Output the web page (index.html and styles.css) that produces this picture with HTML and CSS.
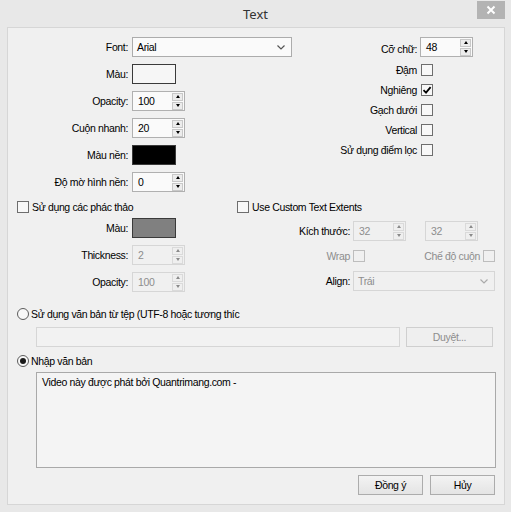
FILE: index.html
```html
<!DOCTYPE html>
<html lang="vi">
<head>
<meta charset="utf-8">
<title>Text</title>
<link rel="stylesheet" href="styles.css">
</head>
<body>
<div class="window">
  <div class="titlebar">
    <span></span>
    <div class="title">Text</div>
    <button class="close" aria-label="Đóng"><svg width="10" height="10" viewBox="0 0 10 10"><path d="M1.5 1.5L8.5 8.5M8.5 1.5L1.5 8.5" stroke="#fff" stroke-width="2"/></svg></button>
  </div>
  <div class="panel">
    <div class="sec-top">
      <div class="grid-l">
        <label>Font:</label>
        <div class="select font-sel"><span>Arial</span><svg class="chev" width="8" height="5" viewBox="0 0 8 5"><polyline points="0.5,0.5 4,4 7.5,0.5" fill="none" stroke="#555" stroke-width="1.2"/></svg></div>
        <label>Màu:</label>
        <div class="swatch sw-light"></div>
        <label>Opacity:</label>
        <div class="spin"><span class="val">100</span><div class="arrows"><i class="up"></i><i class="down"></i></div></div>
        <label>Cuộn nhanh:</label>
        <div class="spin"><span class="val">20</span><div class="arrows"><i class="up"></i><i class="down"></i></div></div>
        <label>Màu nền:</label>
        <div class="swatch sw-black"></div>
        <label>Độ mờ hình nền:</label>
        <div class="spin"><span class="val">0</span><div class="arrows"><i class="up"></i><i class="down"></i></div></div>
      </div>
      <div class="grid-r">
        <label>Cỡ chữ:</label>
        <div class="spin top"><span class="val">48</span><div class="arrows"><i class="up"></i><i class="down"></i></div></div>
        <label>Đậm</label><span class="cb"></span>
        <label>Nghiêng</label><span class="cb"><svg width="10" height="10" viewBox="0 0 10 10"><path d="M1.5 5.2L4 7.6L8.6 2.2" fill="none" stroke="#000" stroke-width="1.8"/></svg></span>
        <label>Gạch dưới</label><span class="cb"></span>
        <label>Vertical</label><span class="cb"></span>
        <label>Sử dụng điểm lọc</label><span class="cb"></span>
      </div>
    </div>

    <div class="sec-mid">
      <div class="col-l">
        <div class="check-head"><span class="cb"></span><span>Sử dụng các phác thảo</span></div>
        <div class="grid-l mid">
          <label>Màu:</label>
          <div class="swatch sw-gray"></div>
          <label>Thickness:</label>
          <div class="spin dis"><span class="val">2</span><div class="arrows"><i class="up"></i><i class="down"></i></div></div>
          <label>Opacity:</label>
          <div class="spin dis"><span class="val">100</span><div class="arrows"><i class="up"></i><i class="down"></i></div></div>
        </div>
      </div>
      <div class="col-r">
        <div class="check-head"><span class="cb"></span><span>Use Custom Text Extents</span></div>
        <div class="ext-grid">
          <label>Kích thước:</label>
          <div class="spin dis"><span class="val">32</span><div class="arrows"><i class="up"></i><i class="down"></i></div></div>
          <div class="cell3"><div class="spin dis"><span class="val">32</span><div class="arrows"><i class="up"></i><i class="down"></i></div></div></div>
          <label class="muted">Wrap</label>
          <span class="cb dis"></span>
          <div class="cell3 end"><span class="muted">Chế độ cuộn</span><span class="cb dis"></span></div>
          <label>Align:</label>
          <div class="select dis align-sel"><span>Trái</span><svg class="chev" width="8" height="5" viewBox="0 0 8 5"><polyline points="0.5,0.5 4,4 7.5,0.5" fill="none" stroke="#aaa" stroke-width="1.2"/></svg></div>
        </div>
      </div>
    </div>

    <div class="opt first"><span class="radio"></span><span>Sử dụng văn bản từ tệp (UTF-8 hoặc tương thíc</span></div>
    <div class="file-row"><div class="field dis"></div><button class="btn dis browse">Duyệt...</button></div>
    <div class="opt second"><span class="radio on"></span><span>Nhập văn bản</span></div>
    <div class="textarea">Video này được phát bởi Quantrimang.com -</div>
    <div class="footer"><button class="btn">Đồng ý</button><button class="btn">Hủy</button></div>
  </div>
</div>
</body>
</html>
```
FILE: styles.css
```css
* { box-sizing: border-box; }
body {
  margin: 0;
  background: #e8e8e8;
  font-family: "Liberation Sans", Arial, sans-serif;
  font-size: 10.5px;
  letter-spacing: -0.35px;
  color: #000;
}
button { font: inherit; letter-spacing: inherit; color: inherit; }

.window {
  width: 511px;
  height: 512px;
  background: #e8e8e8;
  display: flex;
  flex-direction: column;
}
.titlebar {
  height: 27px;
  flex: none;
  display: grid;
  grid-template-columns: 1fr auto 1fr;
  align-items: start;
}
.title {
  font-family: "Noto Sans", sans-serif;
  font-size: 13px;
  letter-spacing: 0;
  color: #333;
  line-height: 28px;
}
.close {
  justify-self: end;
  margin: 1px 6px 0 0;
  width: 28px;
  height: 18px;
  padding: 0;
  border: 0;
  background: #b3b3b3;
  display: flex;
  align-items: center;
  justify-content: center;
}

.panel {
  flex: 1;
  margin: 0 6px 7px 7px;
  border: 1px solid #d6d6d6;
  background: #f0f0f0;
  display: flex;
  flex-direction: column;
}

/* generic controls */
label { white-space: nowrap; }
.muted { color: #8d8d8d; }

.select {
  height: 20px;
  border: 1px solid #acacac;
  background: #fafafa;
  display: flex;
  align-items: center;
  padding: 0 6px 0 4px;
}
.select span { flex: 1; }
.select.dis { border-color: #d6d6d6; background: #f0f0f0; color: #8d8d8d; }
.font-sel { width: 160px; }

.swatch { width: 44px; height: 20px; border: 1px solid #3a3a3a; }
.sw-light { background: #f6f6f6; }
.sw-black { background: #000; }
.sw-gray { background: #808080; }

.spin {
  width: 53px;
  height: 20px;
  border: 1px solid #b0b0b0;
  background: #fafafa;
  display: flex;
  align-items: center;
  padding-left: 5px;
}
.spin .val { flex: 1; }
.spin.top { align-self: start; }
.arrows {
  width: 11px;
  height: 17px;
  margin-right: 1px;
  display: flex;
  flex-direction: column;
  justify-content: space-between;
}
.arrows i {
  height: 8px;
  border: 1px solid #c8c8c8;
  background: #ececec;
  display: flex;
  align-items: center;
  justify-content: center;
}
.arrows i::before {
  content: "";
  width: 0;
  height: 0;
  border-left: 2.5px solid transparent;
  border-right: 2.5px solid transparent;
}
.arrows .up::before { border-bottom: 3px solid #000; }
.arrows .down::before { border-top: 3px solid #000; }
.spin.dis { border-color: #d6d6d6; background: #f0f0f0; color: #8d8d8d; }
.spin.dis .arrows i { border-color: #dadada; background: #efefef; }
.spin.dis .arrows .up::before { border-bottom-color: #8a8a8a; }
.spin.dis .arrows .down::before { border-top-color: #8a8a8a; }

.cb {
  width: 12px;
  height: 12px;
  border: 1px solid #6e6e6e;
  background: #f8f8f8;
  display: flex;
  align-items: center;
  justify-content: center;
}
.cb.dis { border-color: #bdbdbd; background: #f0f0f0; }

.radio {
  width: 12px;
  height: 12px;
  border: 1px solid #5c5c5c;
  border-radius: 50%;
  background: #f8f8f8;
  display: flex;
  align-items: center;
  justify-content: center;
}
.radio.on::before {
  content: "";
  width: 6px;
  height: 6px;
  border-radius: 50%;
  background: #1a1a1a;
}

/* top section */
.sec-top {
  display: flex;
  justify-content: space-between;
  padding: 9px 31px 0 0;
}
.grid-l {
  display: grid;
  grid-template-columns: 120px auto;
  column-gap: 4px;
  row-gap: 7px;
  grid-auto-rows: 20px;
  align-items: center;
  justify-items: start;
}
.grid-l > label { justify-self: end; }
.grid-r {
  display: grid;
  grid-template-columns: auto 53px;
  column-gap: 3px;
  grid-template-rows: 23px repeat(5, 20px);
  align-items: center;
  justify-items: start;
}
.grid-r > label { justify-self: end; }
.grid-r > .cb { margin-left: 1px; }

/* middle section */
.sec-mid { display: flex; margin-top: 8px; }
.col-l { width: 229px; }
.col-r { flex: 1; }
.check-head {
  display: flex;
  align-items: center;
  gap: 3px;
  height: 13px;
}
.col-l .check-head { padding-left: 9px; }
.grid-l.mid { margin-top: 5px; }
.ext-grid {
  margin-top: 8px;
  display: grid;
  grid-template-columns: 116px 53px 89px;
  grid-auto-rows: 20px;
  row-gap: 5px;
  align-items: center;
  justify-items: start;
}
.ext-grid > label { justify-self: end; padding-right: 3px; }
.cell3 { display: flex; align-items: center; padding-left: 19px; }
.cell3.end { justify-self: stretch; justify-content: flex-end; gap: 3px; padding-left: 0; }
.align-sel { grid-column: 2 / span 2; width: 142px; }

/* source options */
.opt {
  display: flex;
  align-items: center;
  gap: 2px;
  height: 13px;
  padding-left: 9px;
}
.opt.first { margin-top: 15px; }
.opt.second { margin-top: 7px; }
.file-row {
  display: flex;
  gap: 6px;
  margin-top: 7px;
  padding-left: 28px;
}
.field {
  width: 364px;
  height: 20px;
  border: 1px solid #d6d6d6;
  background: #f2f2f2;
}
.textarea {
  margin: 5px 8px 0 28px;
  height: 96px;
  border: 1px solid #a9a9a9;
  background: #f4f4f4;
  padding: 3px 5px;
  line-height: 13px;
}

.btn {
  width: 65px;
  height: 20px;
  padding: 0;
  border: 1px solid #acacac;
  background: linear-gradient(#f3f3f3, #e4e4e4);
}
.btn.dis {
  border-color: #cfcfcf;
  background: #efefef;
  color: #8d8d8d;
}
.browse { width: 87px; }
.footer {
  display: flex;
  justify-content: flex-end;
  gap: 7px;
  margin-top: 7px;
  padding-right: 9px;
}
```
